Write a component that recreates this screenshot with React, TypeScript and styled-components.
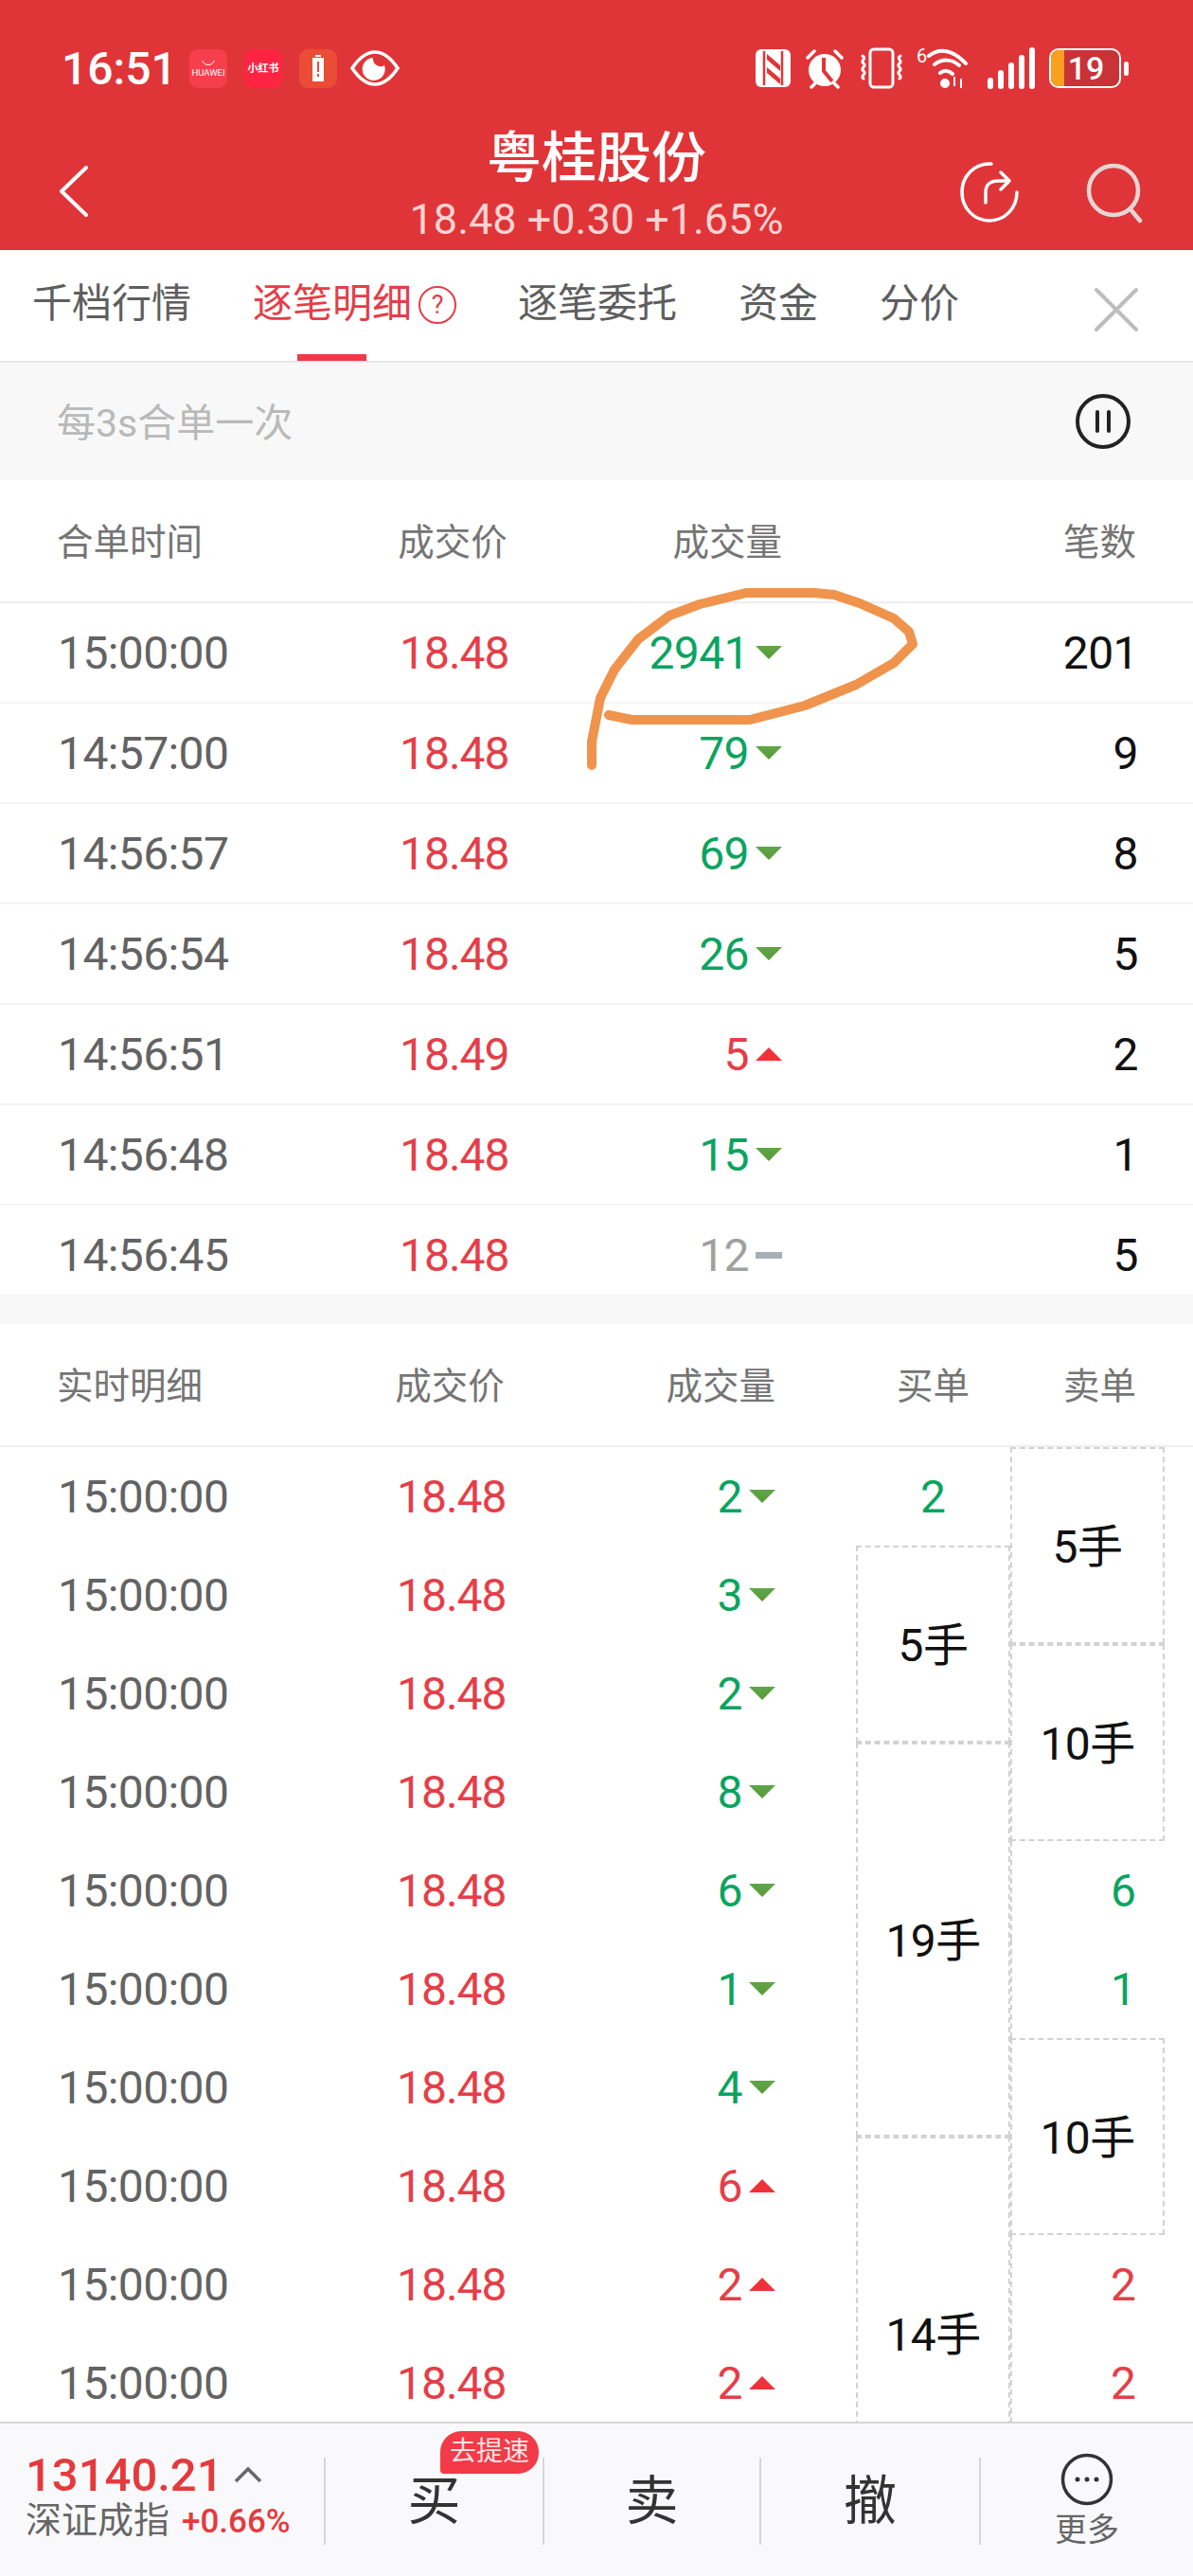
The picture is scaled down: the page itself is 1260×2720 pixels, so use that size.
import React from "react";
import styled, { createGlobalStyle } from "styled-components";

const FONT = `Roboto, "Noto Sans CJK SC", sans-serif`;
const RED = "#e53e48";
const GREEN = "#0aa45f";

const Global = createGlobalStyle`
  html, body { margin: 0; padding: 0; background: #fff; }
  * { box-sizing: border-box; }
  body { font-family: ${FONT}; }
`;

const Page = styled.div`
  position: relative; width: 1260px; height: 2720px; overflow: hidden;
  display: flex; flex-direction: column; background: #fff;
`;
const Header = styled.header`
  height: 264px; flex: none; background: #e03538; color: #fff;
  display: flex; flex-direction: column;
`;
const StatusBar = styled.div`
  height: 142px; flex: none; padding: 2px 68px 0 65px;
  display: flex; align-items: center; justify-content: space-between;
`;
const StatusGroup = styled.div<{ $gap: number }>`
  display: flex; align-items: center; gap: ${p => p.$gap}px;
`;
const Clock = styled.span`
  font-size: 48px; font-weight: 500; width: 117px; white-space: nowrap;
`;
const AppIcon = styled.div<{ $bg: string; $size: number }>`
  width: 40px; height: 41px; border-radius: 9px; background: ${p => p.$bg};
  display: flex; flex-direction: column; align-items: center; justify-content: center;
  font-size: ${p => p.$size}px; line-height: 1; white-space: nowrap; font-weight: 700;
`;
const HuaweiLabel = styled.span`
  font-size: 9.5px; font-weight: 400; margin-top: 2px;
`;
const BatteryBody = styled.div`
  position: relative; width: 76px; height: 42px; border: 2.5px solid #fff; border-radius: 10px;
  display: flex; align-items: center; overflow: hidden; background: #c93236;
`;
const BatteryFill = styled.div`
  width: 14px; align-self: stretch; background: #f9a01f;
`;
const BatteryText = styled.span`
  flex: 1; text-align: center; font-size: 34px; font-weight: 500; line-height: 1; padding-right: 12px;
`;
const BatteryWrap = styled.div`
  display: flex; align-items: center; gap: 3px;
`;
const BatteryNub = styled.div`
  width: 5px; height: 15px; border-radius: 3px; background: #fff;
`;
const WifiWrap = styled.div`
  position: relative; width: 54px; height: 44px; margin-left: -2px;
`;
const WifiSix = styled.span`
  position: absolute; left: 0; top: -1px; font-size: 20px; line-height: 1;
`;
const NavRow = styled.div`
  flex: 1; display: grid; grid-template-columns: 1fr 440px 1fr; padding: 0 46px 0 62px; align-items: start;
`;
const NavLeft = styled.div`
  padding-top: 32px;
`;
const NavRight = styled.div`
  display: flex; justify-content: flex-end; gap: 70px; padding-top: 28px; margin-right: 7px;
`;
const NavCenter = styled.div`
  text-align: center; margin: -9px 0 0 -16px;
`;
const Title = styled.div`
  font-size: 58px; line-height: 68px; font-weight: 500; white-space: nowrap;
`;
const SubTitle = styled.div`
  font-size: 45px; line-height: 50px; color: #fcd3d3; white-space: nowrap; margin-top: 6px;
`;

const Tabs = styled.nav`
  height: 119px; flex: none; display: flex; gap: 65px; padding: 30px 0 0 34px;
  border-bottom: 2px solid #e9e9e9; position: relative;
`;
const Tab = styled.div<{ $active?: boolean }>`
  position: relative; height: 87px; display: flex; align-items: flex-start; gap: 7px;
  font-size: 42px; line-height: 54px; color: ${p => (p.$active ? RED : "#5e5e5e")}; white-space: nowrap;
  ${p => p.$active && `
    &::after {
      content: ""; position: absolute; left: 47px; bottom: 0; width: 73px; height: 7px; background: #ee3a48;
    }
  `}
`;
const HelpMark = styled.span`
  width: 40px; height: 40px; border-radius: 50%; border: 2px solid ${RED}; margin-top: 8px;
  display: flex; align-items: center; justify-content: center; font-size: 27px; line-height: 1;
`;
const CloseButton = styled.div`
  position: absolute; right: 56px; top: 38px; width: 50px; height: 50px;
`;
const SubBar = styled.div`
  height: 124px; flex: none; background: #f8f8f8; padding: 0 65px 0 60px;
  display: flex; align-items: center; justify-content: space-between;
  font-size: 41px; color: #b9b9b9;
`;
const SubBarText = styled.span`
  margin-top: -5px;
`;
const TableHead = styled.div<{ $cols: string; $h: number }>`
  height: ${p => p.$h}px; flex: none; padding: 0 60px 4px; display: grid; grid-template-columns: ${p => p.$cols};
  align-items: center; border-bottom: 2px solid #eee; font-size: 38.5px; color: #757575; white-space: nowrap;
`;
const Label = styled.div<{ $align?: string; $shift?: number }>`
  text-align: ${p => p.$align || "left"}; margin-left: ${p => p.$shift || 0}px;
`;
const MergedList = styled.section`
  height: 729px; flex: none; overflow: hidden;
`;
const MergedRow = styled.div`
  height: 106px; padding: 0 60px; display: grid; grid-template-columns: 360px 116px 290px 1fr;
  align-items: center; border-bottom: 2px solid #f4f4f4; font-size: 48px; letter-spacing: -0.6px;
`;
const TimeCell = styled.div`
  color: #636363; padding-left: 1px;
`;
const PriceCell = styled.div`
  color: ${RED}; text-align: center; padding-left: 2px; letter-spacing: -1px;
`;
const VolumeCell = styled.div<{ $tone: string }>`
  display: flex; justify-content: flex-end; align-items: center; gap: 7px;
  color: ${p => (p.$tone === "down" ? GREEN : p.$tone === "up" ? RED : "#a0a0a0")};
`;
const CountCell = styled.div`
  text-align: right; color: #111; margin-right: -2px;
`;
const Tick = styled.i<{ $tone: string }>`
  width: 28px; height: ${p => (p.$tone === "flat" ? 7 : 14)}px; flex: none; display: block;
  ${p =>
    p.$tone === "down"
      ? `background: linear-gradient(#5fa54a,#5a9a36); clip-path: polygon(0 0,100% 0,50% 100%);`
      : p.$tone === "up"
      ? `background: #ef3239; clip-path: polygon(50% 0,100% 100%,0 100%);`
      : `background: #a8aeb8;`}
`;
const Band = styled.div`
  height: 32px; flex: none; background: #f8f8f8;
`;
const DetailBody = styled.section`
  flex: 1; min-height: 0; display: flex; overflow: hidden;
`;
const DetailRows = styled.div`
  width: 904px; flex: none; padding-left: 60px;
`;
const DetailRow = styled.div`
  height: 104px; display: grid; grid-template-columns: 357px 116px 286px; align-items: center;
  font-size: 48px; letter-spacing: -0.6px;
`;
const SideColumn = styled.div`
  width: 163px; flex: none; display: flex; flex-direction: column;
`;
const MergedCell = styled.div<{ $span: number }>`
  height: ${p => p.$span * 104}px; flex: none; border: 2px dashed #d2d2d2; padding-bottom: 7px;
  display: flex; align-items: center; justify-content: center; color: #111; font-size: 48px;
  letter-spacing: -0.6px; white-space: nowrap;
`;
const SingleCell = styled.div<{ $tone: string; $side: string }>`
  height: 104px; flex: none; display: flex; align-items: center; font-size: 48px;
  justify-content: ${p => (p.$side === "buy" ? "center" : "flex-end")};
  padding-right: ${p => (p.$side === "buy" ? 0 : 30)}px;
  color: ${p => (p.$tone === "down" ? GREEN : RED)};
  border-left: ${p => (p.$side === "sell" ? "2px dashed #d2d2d2" : "0")};
`;

const BottomBar = styled.footer`
  height: 163px; flex: none; background: #f9f9fb; border-top: 2px solid #d4d4d4;
  display: flex; align-items: flex-start; padding-top: 36px;
`;
const IndexBlock = styled.div`
  width: 342px; height: 92px; flex: none; padding: 0 0 0 27px; margin-top: -5px;
`;
const IndexTop = styled.div`
  display: flex; align-items: center; gap: 11px; height: 46px; font-size: 49px; font-weight: 500; color: #e53a3d;
`;
const IndexBottom = styled.div`
  display: flex; align-items: baseline; gap: 13px; font-size: 38px; line-height: 50px; color: #666; white-space: nowrap;
`;
const IndexChange = styled.span`
  font-size: 35px; color: #e53a3d; font-weight: 500;
`;
const Action = styled.div<{ $w: number }>`
  position: relative; width: ${p => p.$w}px; height: 92px; flex: none; border-left: 2px solid #d6d6d6;
  display: flex; flex-direction: column; align-items: center; justify-content: center; padding-bottom: 11px;
  font-size: 56px; color: #333;
`;
const MoreAction = styled(Action)`
  justify-content: flex-start; padding-bottom: 0;
`;
const MoreIcon = styled.svg`
  margin-top: -5px; flex: none;
`;
const Badge = styled.span`
  position: absolute; left: 121px; top: -28px; width: 104px; height: 45px; background: #f23a48; color: #fde3e3;
  border-radius: 22px 22px 22px 4px; font-size: 28px; line-height: 43px; text-align: center; white-space: nowrap;
`;
const MoreLabel = styled.span`
  font-size: 34px; line-height: 40px; color: #666; margin-top: 5px; white-space: nowrap;
`;
const Annotation = styled.svg`
  position: absolute; left: 0; top: 0; pointer-events: none;
`;

type Tone = "up" | "down" | "flat";
const merged: [string, string, string, Tone, string][] = [
  ["15:00:00", "18.48", "2941", "down", "201"],
  ["14:57:00", "18.48", "79", "down", "9"],
  ["14:56:57", "18.48", "69", "down", "8"],
  ["14:56:54", "18.48", "26", "down", "5"],
  ["14:56:51", "18.49", "5", "up", "2"],
  ["14:56:48", "18.48", "15", "down", "1"],
  ["14:56:45", "18.48", "12", "flat", "5"],
];
const detail: [string, Tone][] = [
  ["2", "down"], ["3", "down"], ["2", "down"], ["8", "down"], ["6", "down"],
  ["1", "down"], ["4", "down"], ["6", "up"], ["2", "up"], ["2", "up"],
];
type SideItem = { span?: number; text: string; tone?: Tone };
const buys: SideItem[] = [
  { text: "2", tone: "down" }, { span: 2, text: "5手" }, { span: 4, text: "19手" }, { span: 4, text: "14手" },
];
const sells: SideItem[] = [
  { span: 2, text: "5手" }, { span: 2, text: "10手" }, { text: "6", tone: "down" }, { text: "1", tone: "down" },
  { span: 2, text: "10手" }, { text: "2", tone: "up" }, { text: "2", tone: "up" },
];

const Side = ({ items, side }: { items: SideItem[]; side: string }) => (
  <SideColumn>
    {items.map((c, i) =>
      c.span ? (
        <MergedCell key={i} $span={c.span}>{c.text}</MergedCell>
      ) : (
        <SingleCell key={i} $tone={c.tone || "up"} $side={side}>{c.text}</SingleCell>
      )
    )}
  </SideColumn>
);

export default function App() {
  return (
    <Page>
      <Global />
      <Header>
        <StatusBar>
          <StatusGroup $gap={18}>
            <Clock>16:51</Clock>
            <AppIcon $bg="#f63f4c" $size={8}>
              <svg width="14" height="7" viewBox="0 0 14 7"><path d="M1 1c1 6 11 6 12 0" fill="none" stroke="#fff" strokeWidth="1" /></svg>
              <HuaweiLabel>HUAWEI</HuaweiLabel>
            </AppIcon>
            <AppIcon $bg="#ff2442" $size={11}>小红书</AppIcon>
            <AppIcon $bg="#ea4c36" $size={8}>
              <svg width="14" height="28" viewBox="0 0 14 28"><path d="M4 0h6v2H4zM1 3h12v25H1z" fill="#fff" /><path d="M6 7h2v11H6zM6 20h2v3H6z" fill="#ea4c36" /></svg>
            </AppIcon>
            <svg width="52" height="38" viewBox="0 0 52 38" style={{ marginLeft: -4 }}>
              <path d="M2 19C10 7 18 2 26 2s16 5 24 17C42 31 34 36 26 36S10 31 2 19z" fill="none" stroke="#fff" strokeWidth="3.5" />
              <path d="M24 8a12 12 0 1 0 12 8 8 8 0 0 1-12-8z" fill="#fff" />
            </svg>
          </StatusGroup>
          <StatusGroup $gap={15}>
            <svg width="37" height="42" viewBox="0 0 37 42">
              <rect x="0" y="1" width="37" height="40" rx="6" fill="#fff" />
              <path d="M9 3v36M28 3v36" stroke="#e03538" strokeWidth="2.5" />
              <path d="M12 6l14 12v6L12 12zM12 20l14 12v6L12 26z" fill="#e03538" />
            </svg>
            <svg width="42" height="44" viewBox="0 0 42 44">
              <circle cx="21" cy="24" r="17" fill="#fff" />
              <path d="M20 11v14l9 11" fill="none" stroke="#e03538" strokeWidth="4" />
              <path d="M3 11l7-7M39 11l-7-7M7 42l5-5M35 42l-5-5" stroke="#fff" strokeWidth="3.5" strokeLinecap="round" />
            </svg>
            <svg width="48" height="44" viewBox="0 0 48 44">
              <rect x="12" y="2" width="24" height="40" rx="4" fill="none" stroke="#fff" strokeWidth="3" />
              <path d="M4 9c5 3-3 5 1 8s-4 5 0 8-4 5 0 8M44 9c-5 3 3 5-1 8s4 5 0 8 4 5 0 8" fill="none" stroke="#fff" strokeWidth="3" strokeLinecap="round" />
            </svg>
            <WifiWrap>
              <WifiSix>6</WifiSix>
              <svg width="54" height="44" viewBox="0 0 54 44">
                <path d="M13 9c10-8 24-8 39 8M19 18c8-6 18-6 26 1M25 27c4-3 9-3 13 1" fill="none" stroke="#fff" strokeWidth="4" strokeLinecap="round" />
                <circle cx="30" cy="38" r="5" fill="#fff" />
                <path d="M40 31v10M47 33v10" stroke="#fff" strokeWidth="2" />
              </svg>
            </WifiWrap>
            <svg width="50" height="44" viewBox="0 0 50 44" style={{ marginLeft: 6 }}>
              {[0, 1, 2, 3, 4].map(i => (
                <rect key={i} x={i * 11} y={32 - i * 8} width="6" height={12 + i * 8} rx="3" fill="#fff" />
              ))}
            </svg>
            <BatteryWrap>
              <BatteryBody>
                <BatteryFill />
                <BatteryText>19</BatteryText>
              </BatteryBody>
              <BatteryNub />
            </BatteryWrap>
          </StatusGroup>
        </StatusBar>
        <NavRow>
          <NavLeft>
            <svg width="32" height="56" viewBox="0 0 32 56">
              <path d="M29 3L3 28l26 25" fill="none" stroke="#fff" strokeWidth="4" strokeLinecap="round" strokeLinejoin="round" />
            </svg>
          </NavLeft>
          <NavCenter>
            <Title>粤桂股份</Title>
            <SubTitle>18.48 +0.30 +1.65%</SubTitle>
          </NavCenter>
          <NavRight>
            <svg width="64" height="66" viewBox="0 0 64 66">
              <path d="M34 3C16 2 3 16 3 33s13 30 29 30 29-13 29-30" fill="none" stroke="#fff" strokeWidth="3.5" strokeLinecap="round" />
              <path d="M28 44V33c0-8 5-12 13-12h11M44 12l9 9-9 9" fill="none" stroke="#fff" strokeWidth="3.5" strokeLinecap="round" strokeLinejoin="round" />
            </svg>
            <svg width="60" height="66" viewBox="0 0 60 66">
              <circle cx="29" cy="31" r="26" fill="none" stroke="#e6d5d5" strokeWidth="4.5" />
              <path d="M47 51l10 12" stroke="#e6d5d5" strokeWidth="4.5" strokeLinecap="round" />
            </svg>
          </NavRight>
        </NavRow>
      </Header>

      <Tabs>
        <Tab>千档行情</Tab>
        <Tab $active>逐笔明细<HelpMark>?</HelpMark></Tab>
        <Tab>逐笔委托</Tab>
        <Tab>资金</Tab>
        <Tab>分价</Tab>
        <CloseButton>
          <svg width="50" height="50" viewBox="0 0 50 50">
            <path d="M4 4l42 42M46 4L4 46" stroke="#bdbdbd" strokeWidth="4" strokeLinecap="round" />
          </svg>
        </CloseButton>
      </Tabs>

      <SubBar>
        <SubBarText>每3s合单一次</SubBarText>
        <svg width="60" height="60" viewBox="0 0 60 60">
          <circle cx="30" cy="30" r="27" fill="none" stroke="#222" strokeWidth="4" />
          <path d="M24 20v20M36 20v20" stroke="#222" strokeWidth="4" strokeLinecap="round" />
        </svg>
      </SubBar>

      <TableHead $h={130} $cols="360px 116px 290px 1fr">
        <Label>合单时间</Label>
        <Label $align="center">成交价</Label>
        <Label $align="right">成交量</Label>
        <Label $align="right">笔数</Label>
      </TableHead>
      <MergedList>
        {merged.map(([t, p, v, tone, c]) => (
          <MergedRow key={t}>
            <TimeCell>{t}</TimeCell>
            <PriceCell>{p}</PriceCell>
            <VolumeCell $tone={tone}>{v}<Tick $tone={tone} /></VolumeCell>
            <CountCell>{c}</CountCell>
          </MergedRow>
        ))}
      </MergedList>
      <Band />

      <TableHead $h={130} $cols="357px 116px 286px 248px 133px">
        <Label>实时明细</Label>
        <Label $align="center">成交价</Label>
        <Label $align="right">成交量</Label>
        <Label $align="center" $shift={85}>买单</Label>
        <Label $align="right">卖单</Label>
      </TableHead>
      <DetailBody>
        <DetailRows>
          {detail.map(([v, tone], i) => (
            <DetailRow key={i}>
              <TimeCell>15:00:00</TimeCell>
              <PriceCell>18.48</PriceCell>
              <VolumeCell $tone={tone}>{v}<Tick $tone={tone} /></VolumeCell>
            </DetailRow>
          ))}
        </DetailRows>
        <Side items={buys} side="buy" />
        <Side items={sells} side="sell" />
      </DetailBody>

      <BottomBar>
        <IndexBlock>
          <IndexTop>
            13140.21
            <svg width="30" height="18" viewBox="0 0 30 18">
              <path d="M2 16L15 3l13 13" fill="none" stroke="#666" strokeWidth="3.5" />
            </svg>
          </IndexTop>
          <IndexBottom>深证成指<IndexChange>+0.66%</IndexChange></IndexBottom>
        </IndexBlock>
        <Action $w={231}>买<Badge>去提速</Badge></Action>
        <Action $w={229}>卖</Action>
        <Action $w={232}>撤</Action>
        <MoreAction $w={226}>
          <MoreIcon width="56" height="56" viewBox="0 0 56 56">
            <circle cx="28" cy="28" r="25.5" fill="none" stroke="#333" strokeWidth="3.5" />
            <circle cx="18" cy="28" r="2.5" fill="#333" /><circle cx="28" cy="28" r="2.5" fill="#333" /><circle cx="38" cy="28" r="2.5" fill="#333" />
          </MoreIcon>
          <MoreLabel>更多</MoreLabel>
        </MoreAction>
      </BottomBar>

      <Annotation width="1260" height="2720" viewBox="0 0 1260 2720">
        <polyline
          points="625,808 625,783 634,737 649,707 674,675 707,650 739,638 788,626 860,626 881,628 908,637 944,653 960,667 964,680 944,700 904,723 850,745 792,760 667,760 643,755"
          fill="none" stroke="#f0934c" strokeWidth="10" strokeLinecap="round" strokeLinejoin="round"
        />
      </Annotation>
    </Page>
  );
}
